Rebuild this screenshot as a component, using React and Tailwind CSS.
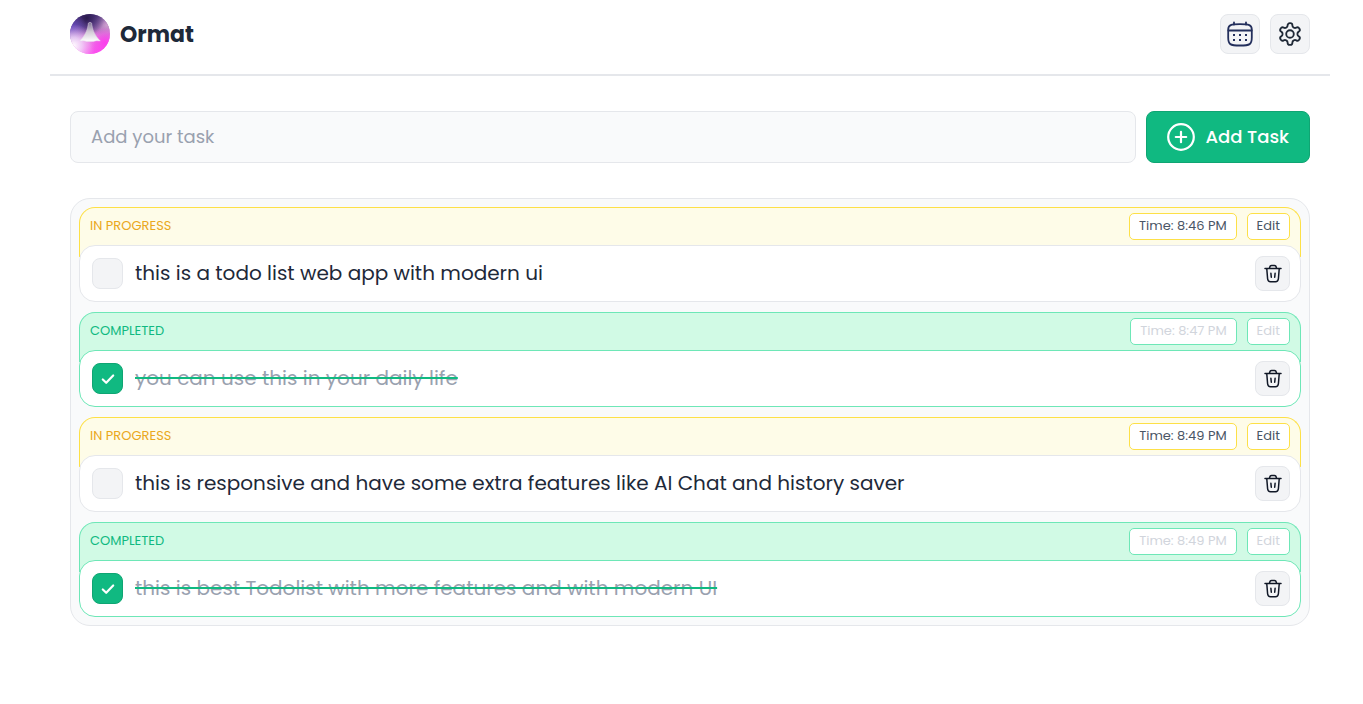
import { useState } from "react";

const initialTasks = [
  { id: 1, text: "this is a todo list web app with modern ui", time: "8:46 PM", done: false },
  { id: 2, text: "you can use this in your daily life", time: "8:47 PM", done: true },
  { id: 3, text: "this is responsive and have some extra features like AI Chat and history saver", time: "8:49 PM", done: false },
  { id: 4, text: "this is best Todolist with more features and with modern UI", time: "8:49 PM", done: true },
];

function Logo() {
  return (
    <svg viewBox="0 0 40 40" className="size-10" aria-hidden="true">
      <defs>
        <linearGradient id="logo-base" x1="0.3" y1="0" x2="0.6" y2="1">
          <stop offset="0" stopColor="#33205f" />
          <stop offset="0.3" stopColor="#76509f" />
          <stop offset="0.6" stopColor="#e08ade" />
          <stop offset="1" stopColor="#fd4df0" />
        </linearGradient>
        <radialGradient id="logo-dark" cx="0.42" cy="0.1" r="0.45">
          <stop offset="0" stopColor="#2a1a4c" />
          <stop offset="0.5" stopColor="#3b2768" stopOpacity="0.6" />
          <stop offset="1" stopColor="#3b2768" stopOpacity="0" />
        </radialGradient>
        <radialGradient id="logo-violet" cx="0.05" cy="0.36" r="0.38">
          <stop offset="0" stopColor="#5b43b8" />
          <stop offset="1" stopColor="#7a5fd0" stopOpacity="0" />
        </radialGradient>
        <radialGradient id="logo-light" cx="0.08" cy="0.8" r="0.55">
          <stop offset="0" stopColor="#ffffff" />
          <stop offset="0.4" stopColor="#f3dcfb" stopOpacity="0.8" />
          <stop offset="1" stopColor="#f8b0f4" stopOpacity="0" />
        </radialGradient>
        <radialGradient id="logo-gray" cx="0.92" cy="0.28" r="0.4">
          <stop offset="0" stopColor="#cf9fcf" />
          <stop offset="1" stopColor="#a17fb0" stopOpacity="0" />
        </radialGradient>
        <radialGradient id="logo-pink" cx="0.88" cy="0.72" r="0.4">
          <stop offset="0" stopColor="#fb3fec" />
          <stop offset="1" stopColor="#fb3fec" stopOpacity="0" />
        </radialGradient>
        <linearGradient id="logo-ship" x1="0" y1="0" x2="0" y2="1">
          <stop offset="0" stopColor="#7f7396" />
          <stop offset="0.5" stopColor="#d2cbd6" />
          <stop offset="1" stopColor="#ffffff" />
        </linearGradient>
      </defs>
      <circle cx="20" cy="20" r="20" fill="url(#logo-base)" />
      <circle cx="20" cy="20" r="20" fill="url(#logo-gray)" />
      <circle cx="20" cy="20" r="20" fill="url(#logo-dark)" />
      <circle cx="20" cy="20" r="20" fill="url(#logo-violet)" />
      <circle cx="20" cy="20" r="20" fill="url(#logo-light)" />
      <circle cx="20" cy="20" r="20" fill="url(#logo-pink)" />
      <path
        d="M18.400 9Q20 7.500 21.600 9C22.300 14.500 23.800 20.500 30.300 27Q25.800 26.300 23.500 27.400H16.500Q14.200 26.300 9.700 27C16.200 20.500 17.700 14.500 18.400 9Z"
        fill="url(#logo-ship)"
        stroke="#e6d9ec"
        strokeOpacity="0.45"
        strokeWidth="1"
      />
    </svg>
  );
}

function CalendarIcon() {
  return (
    <svg viewBox="0 0 28 28" className="size-7" fill="none" stroke="#232f5c" strokeWidth="1.800" strokeLinecap="round" aria-hidden="true">
      <path d="M14 4.200C5 4.200 2.200 4.800 2.200 9.500V17.500C2.200 24.500 4 25.500 14 25.500S25.800 24.500 25.800 17.500V9.500C25.800 4.800 23 4.200 14 4.200Z" />
      <path d="M2.400 10.500H25.600M8 2.500V4.500M20 2.500V4.500" />
      <g fill="#232f5c" stroke="none">
        <rect x="7" y="14" width="2" height="2" />
        <rect x="13" y="14" width="2" height="2" />
        <rect x="19" y="14" width="2" height="2" />
        <rect x="7" y="19" width="2" height="2" />
        <rect x="13" y="19" width="2" height="2" />
        <rect x="19" y="19" width="2" height="2" />
      </g>
    </svg>
  );
}

function GearIcon() {
  return (
    <svg viewBox="0 0 24 24" className="size-[26px]" fill="none" stroke="#1f2937" strokeWidth="1.700" strokeLinecap="round" strokeLinejoin="round" aria-hidden="true">
      <path d="M12.220 2h-.440a2 2 0 0 0-2 2v.180a2 2 0 0 1-1 1.730l-.430.250a2 2 0 0 1-2 0l-.150-.080a2 2 0 0 0-2.730.730l-.220.380a2 2 0 0 0 .730 2.730l.150.100a2 2 0 0 1 1 1.720v.510a2 2 0 0 1-1 1.740l-.150.090a2 2 0 0 0-.730 2.730l.220.380a2 2 0 0 0 2.730.730l.150-.080a2 2 0 0 1 2 0l.430.250a2 2 0 0 1 1 1.730V20a2 2 0 0 0 2 2h.440a2 2 0 0 0 2-2v-.180a2 2 0 0 1 1-1.730l.430-.250a2 2 0 0 1 2 0l.150.080a2 2 0 0 0 2.730-.730l.220-.390a2 2 0 0 0-.730-2.730l-.150-.080a2 2 0 0 1-1-1.740v-.500a2 2 0 0 1 1-1.740l.150-.090a2 2 0 0 0 .730-2.730l-.220-.380a2 2 0 0 0-2.730-.730l-.150.080a2 2 0 0 1-2 0l-.430-.250a2 2 0 0 1-1-1.730V4a2 2 0 0 0-2-2z" />
      <circle cx="12" cy="12" r="3.500" />
    </svg>
  );
}

function PlusCircleIcon() {
  return (
    <svg viewBox="0 0 28 28" className="size-7" fill="none" stroke="currentColor" strokeWidth="2.200" strokeLinecap="round" aria-hidden="true">
      <circle cx="14" cy="14" r="12.800" />
      <path d="M14 8.800V19.200M8.800 14H19.200" />
    </svg>
  );
}

function TrashIcon() {
  return (
    <svg viewBox="0 0 20 20" className="size-5" fill="none" stroke="#111827" strokeWidth="1.500" strokeLinecap="round" strokeLinejoin="round" aria-hidden="true">
      <path d="M2 4.500H18" />
      <path d="M6.500 4.200C6.800 2 7.200 1.500 8.500 1.500H11.500C12.800 1.500 13.200 2 13.500 4.200" />
      <path d="M3.800 5L4.600 14.800Q4.900 17.800 7.500 17.800H12.500Q15.100 17.800 15.400 14.800L16.200 5" />
      <path d="M7.900 9.200L8.300 13.200M12.100 9.200L11.700 13.200" />
    </svg>
  );
}

function Task({ task, onToggle, onDelete }) {
  const { id, text, time, done } = task;
  const tag = done
    ? "rounded-[5px] border border-[#6ee7b7] bg-white px-[9px] pb-0.5 text-[13px] leading-[23px] text-gray-300"
    : "rounded-[5px] border border-[#fde047] bg-white px-[9px] pb-0.5 text-[13px] leading-[23px] text-gray-600";
  return (
    <li>
      <div
        className={
          done
            ? "flex items-start justify-between rounded-t-2xl border border-b-0 border-[#6ee7b7] bg-[#d1fae5] px-2.5 pt-[5px] pb-[17px]"
            : "flex items-start justify-between rounded-t-2xl border border-b-0 border-[#fde047] bg-[#fefce8] px-2.5 pt-[5px] pb-[17px]"
        }
      >
        <span
          className={
            done
              ? "text-[13px] leading-[26px] text-[#10b981]"
              : "text-[13px] leading-[26px] text-[#eaa820]"
          }
        >
          {done ? "COMPLETED" : "IN PROGRESS"}
        </span>
        <div className="flex gap-2.5">
          <span className={tag}>Time: {time}</span>
          <button type="button" disabled={done} className={tag}>Edit</button>
        </div>
      </div>
      <div
        className={
          done
            ? "relative -mt-3 flex items-center gap-3 rounded-2xl border border-[#6ee7b7] bg-white py-2.5 pr-2.5 pl-3"
            : "relative -mt-3 flex items-center gap-3 rounded-2xl border border-gray-200 bg-white py-2.5 pr-2.5 pl-3"
        }
      >
        <span className="grid shrink-0 place-items-center">
          <input
            id={`task-${id}`}
            type="checkbox"
            checked={done}
            onChange={() => onToggle(id)}
            className="col-start-1 row-start-1 size-[31px] cursor-pointer appearance-none rounded-lg border border-gray-200 bg-gray-100 checked:border-[#0fa573] checked:bg-[#10b981]"
          />
          {done && (
            <svg viewBox="0 0 14 14" className="pointer-events-none col-start-1 row-start-1 size-3.5" fill="none" stroke="white" strokeWidth="2.200" strokeLinecap="round" strokeLinejoin="round" aria-hidden="true">
              <path d="M1.800 7.500L5.200 10.800L12.200 3.500" />
            </svg>
          )}
        </span>
        <label
          htmlFor={`task-${id}`}
          className={
            done
              ? "min-w-0 flex-1 pb-0.5 text-[20px] leading-7 text-gray-400"
              : "min-w-0 flex-1 pb-0.5 text-[20px] leading-7 text-gray-800"
          }
        >
          <span className={done ? "line-through decoration-[#10b981] decoration-2" : ""}>{text}</span>
        </label>
        <button
          type="button"
          aria-label="Delete task"
          onClick={() => onDelete(id)}
          className="grid size-[35px] shrink-0 place-items-center rounded-lg border border-gray-200 bg-gray-100"
        >
          <TrashIcon />
        </button>
      </div>
    </li>
  );
}

export default function App() {
  const [tasks, setTasks] = useState(initialTasks);
  const [draft, setDraft] = useState("");

  const addTask = (event) => {
    event.preventDefault();
    const text = draft.trim();
    if (!text) return;
    const time = new Date().toLocaleTimeString("en-US", { hour: "numeric", minute: "2-digit" });
    setTasks([...tasks, { id: Date.now(), text, time, done: false }]);
    setDraft("");
  };
  const toggle = (id) => setTasks(tasks.map((t) => (t.id === id ? { ...t, done: !t.done } : t)));
  const remove = (id) => setTasks(tasks.filter((t) => t.id !== id));

  return (
    <div className="min-h-screen bg-white pr-[33px] pb-10 pl-[50px] font-['Poppins','Inter',sans-serif]">
      <header className="flex items-center justify-between border-b-2 border-gray-200 px-5 pt-3.5 pb-5">
        <div className="flex items-center gap-2.5">
          <Logo />
          <h1 className="text-[22px] leading-[33px] font-bold text-gray-800">Ormat</h1>
        </div>
        <div className="flex gap-2.5">
          <button type="button" aria-label="Calendar" className="grid size-10 place-items-center rounded-lg border border-gray-200 bg-gray-100">
            <CalendarIcon />
          </button>
          <button type="button" aria-label="Settings" className="grid size-10 place-items-center rounded-lg border border-gray-200 bg-gray-100">
            <GearIcon />
          </button>
        </div>
      </header>

      <main className="px-5 pt-[35px]">
        <form onSubmit={addTask} className="flex gap-2.5">
          <input
            type="text"
            aria-label="Add your task"
            placeholder="Add your task"
            value={draft}
            onChange={(event) => setDraft(event.target.value)}
            className="h-[52px] min-w-0 flex-1 rounded-lg border border-gray-200 bg-gray-50 px-5 pb-0.5 text-[18px] text-gray-800 outline-none placeholder:text-gray-400"
          />
          <button
            type="submit"
            className="flex h-[52px] items-center gap-2.5 rounded-lg border border-[#0fa573] bg-[#10b981] px-5 text-[18px] leading-[26px] font-medium whitespace-nowrap text-white"
          >
            <PlusCircleIcon />
            Add Task
          </button>
        </form>

        <ul className="mt-[35px] flex flex-col gap-2.5 rounded-[20px] border border-gray-200 bg-gray-50 p-2">
          {tasks.map((task) => (
            <Task key={task.id} task={task} onToggle={toggle} onDelete={remove} />
          ))}
        </ul>
      </main>
    </div>
  );
}
